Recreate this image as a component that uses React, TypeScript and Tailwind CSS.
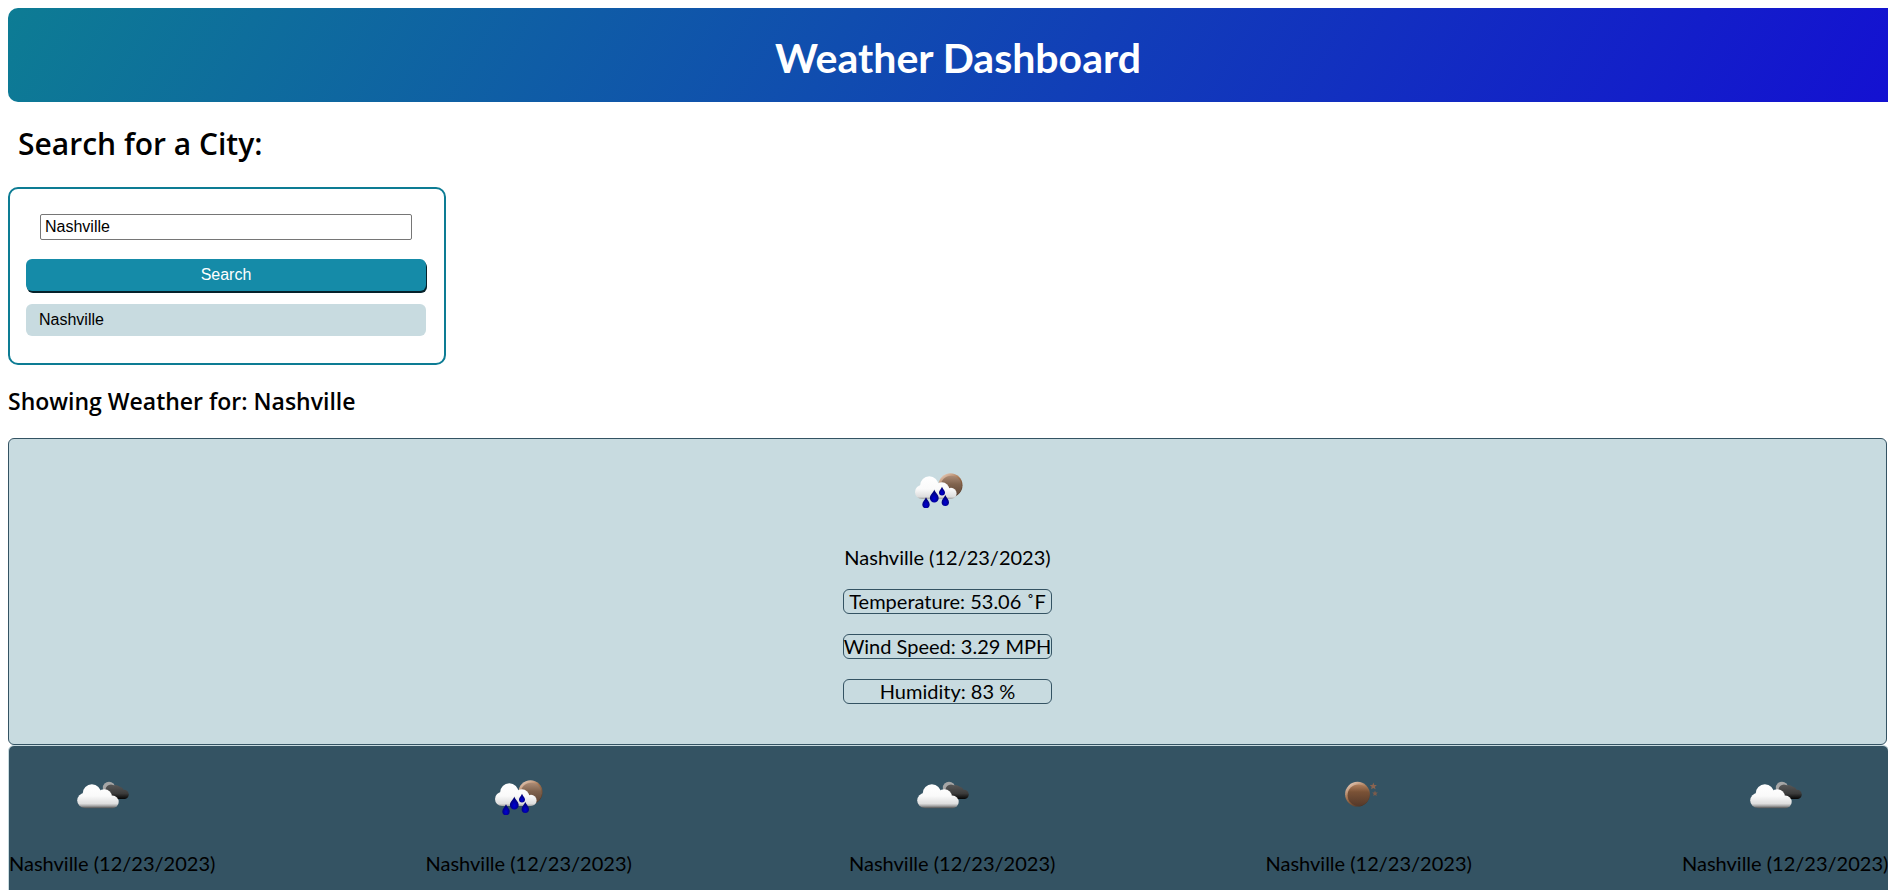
import { useState } from "react";

type IconKind = "clouds" | "rain" | "clear";

function WeatherIcon({ kind }: { kind: IconKind }) {
  return (
    <svg viewBox="0 0 100 100" className="block size-[100px]" role="img" aria-label={kind}>
      <defs>
        <linearGradient id="white-cloud" gradientUnits="userSpaceOnUse" x1="0" y1="38" x2="0" y2="62">
          <stop offset="0" stopColor="#ffffff" />
          <stop offset="0.5" stopColor="#fafafa" />
          <stop offset="0.82" stopColor="#dddddd" />
          <stop offset="0.92" stopColor="#a0a0a0" />
          <stop offset="1" stopColor="#555555" />
        </linearGradient>
        <linearGradient id="dark-cloud" gradientUnits="userSpaceOnUse" x1="0" y1="39" x2="0" y2="53">
          <stop offset="0" stopColor="#565656" />
          <stop offset="0.6" stopColor="#3c3c3c" />
          <stop offset="1" stopColor="#050505" />
        </linearGradient>
        <linearGradient id="moon" x1="0" y1="0" x2="0" y2="1">
          <stop offset="0" stopColor="#b07f5c" />
          <stop offset="0.35" stopColor="#7a5236" />
          <stop offset="1" stopColor="#55392a" />
        </linearGradient>
        <linearGradient id="rain-moon" x1="0" y1="0" x2="0" y2="1">
          <stop offset="0" stopColor="#ac8c76" />
          <stop offset="0.4" stopColor="#80634e" />
          <stop offset="1" stopColor="#5b4334" />
        </linearGradient>
        <linearGradient id="moon-rim" x1="0" y1="0" x2="0.6" y2="1">
          <stop offset="0" stopColor="#f6e0d2" />
          <stop offset="0.5" stopColor="#a77753" />
          <stop offset="1" stopColor="#50321f" />
        </linearGradient>
        <radialGradient id="drop" cx="0.5" cy="0.7" r="0.6">
          <stop offset="0" stopColor="#0000d8" />
          <stop offset="1" stopColor="#00006c" />
        </radialGradient>
      </defs>
      {kind === "clear" && (
        <g>
          <circle cx="47.5" cy="48.2" r="12.4" fill="url(#moon-rim)" />
          <circle cx="48.4" cy="49.2" r="10.8" fill="url(#moon)" />
          <path d="M63.3 36.500l1 2.400 2.600.2-2 1.700.7 2.500-2.300-1.400-2.200 1.400.6-2.500-2-1.700 2.700-.2z" fill="#8a6450" />
          <path d="M65 44.500l.8 2 2.100.1-1.600 1.400.5 2.100-1.800-1.200-1.800 1.200.5-2.100-1.600-1.400 2.100-.1z" fill="#7d5c4b" />
        </g>
      )}
      {kind === "clouds" && (
        <g>
          <circle cx="56" cy="42" r="6.2" fill="#a6a6a6" />
          <g fill="url(#dark-cloud)">
            <circle cx="58" cy="44" r="5.5" />
            <circle cx="62.5" cy="44.5" r="5.5" />
            <circle cx="66" cy="45.5" r="4.8" />
            <circle cx="71.2" cy="48.4" r="4.6" />
            <rect x="58" y="44" width="13.5" height="9" />
          </g>
          <g fill="url(#white-cloud)">
            <circle cx="31.8" cy="54.5" r="7.6" />
            <circle cx="38.9" cy="47.5" r="9.2" />
            <circle cx="51.3" cy="51" r="7.8" />
            <circle cx="59.4" cy="55.9" r="6.3" />
            <rect x="31.8" y="50" width="27.6" height="12.2" />
          </g>
        </g>
      )}
      {kind === "rain" && (
        <g>
          <circle cx="60.5" cy="46.3" r="12" fill="url(#moon-rim)" />
          <circle cx="61.2" cy="47.3" r="10.6" fill="url(#rain-moon)" />
          <g fill="url(#white-cloud)">
            <circle cx="32" cy="53" r="7" />
            <circle cx="39.3" cy="46.5" r="9.2" />
            <circle cx="51.8" cy="50.8" r="7.6" />
            <circle cx="61" cy="54.4" r="5.6" />
            <rect x="32" y="50" width="29" height="10" />
          </g>
          <path d="M44.300 50.500c1 3.200 4.400 5.200 4.400 8.600a4.400 4.400 0 0 1-8.800 0c0-3.400 3.400-5.400 4.400-8.600z" fill="url(#drop)" />
          <path d="M52 47.700c.7 2.200 3 3.600 3 5.800a3 3 0 0 1-6 0c0-2.200 2.300-3.600 3-5.800z" fill="url(#drop)" />
          <path d="M36 58.200c.9 2.600 3.700 4.300 3.700 7.200a3.700 3.700 0 0 1-7.400 0c0-2.900 2.800-4.600 3.700-7.200z" fill="url(#drop)" />
          <path d="M55.300 56c.9 2.600 3.700 4.300 3.700 7.200a3.700 3.700 0 0 1-7.400 0c0-2.900 2.800-4.600 3.700-7.200z" fill="url(#drop)" />
        </g>
      )}
    </svg>
  );
}

const forecast: { id: number; icon: IconKind }[] = [
  { id: 1, icon: "clouds" },
  { id: 2, icon: "rain" },
  { id: 3, icon: "clouds" },
  { id: 4, icon: "clear" },
  { id: 5, icon: "clouds" },
];

const readings = ["Temperature: 53.06 ˚F", "Wind Speed: 3.29 MPH", "Humidity: 83 %"];

export default function App() {
  const [city, setCity] = useState("Nashville");

  return (
    <div className="h-screen overflow-hidden bg-white pt-2 pl-2 font-['Trebuchet_MS',Lato,sans-serif] text-black">
      <header className="-mr-5 rounded-[10px] bg-linear-120/srgb from-[#0d7c94] to-[#1410d2] pt-[23px] pb-[17px]">
        <h1 className="text-center text-[41px] leading-[54px] font-bold text-white">Weather Dashboard</h1>
      </header>

      <main>
        <h2 className="mt-[23px] pl-[10px] font-['Trebuchet_MS','Open_Sans',sans-serif] text-[30px] leading-[38px] font-semibold">
          <label htmlFor="city">Search for a City:</label>
        </h2>
        <form
          className="mt-6 flex w-[438px] flex-col rounded-[10px] border-2 border-[#0d7c94] pt-[25px] pr-[18px] pb-[27px] pl-4 font-['Liberation_Sans',Arial,sans-serif] text-base"
          onSubmit={(e) => e.preventDefault()}
        >
          <input
            id="city"
            type="text"
            value={city}
            onChange={(e) => setCity(e.target.value)}
            className="mx-[14px] h-[26px] rounded-[2px] border border-[#767676] bg-white px-1 leading-5"
          />
          <button
            type="submit"
            className="mt-[19px] h-8 rounded-md bg-[#158ba8] text-white shadow-[1px_2px_0_#06222b]"
          >
            Search
          </button>
          <button type="button" className="mt-[13px] h-8 rounded-md bg-[#c8dbe0] px-[13px] text-left">
            Nashville
          </button>
        </form>

        <h3 className="mt-5 font-['Trebuchet_MS','Open_Sans',sans-serif] text-[23px] leading-8 font-semibold">
          Showing Weather for: Nashville
        </h3>

        <section className="mt-[21px] mr-px flex flex-col items-center rounded-md border border-[#345363] bg-[#c8dbe0] pb-10 text-[20px] leading-[23px]">
          <div className="flex w-max flex-col gap-5">
            <div className="-mb-[13px] ml-[47px]">
              <WeatherIcon kind="rain" />
            </div>
            <p className="text-center whitespace-nowrap">Nashville (12/23/2023)</p>
            {readings.map((r) => (
              <p key={r} className="rounded-md border border-[#345363] text-center whitespace-nowrap">
                {r}
              </p>
            ))}
          </div>
        </section>

        <section className="-mr-px grid grid-cols-[206px_213px_206px_206px_206px] justify-between rounded-md border border-[#c8dbe0] bg-[#345363] pb-10 text-[20px] leading-[23px]">
          {forecast.map((day) => (
            <article key={day.id} className="flex w-[206px] flex-col gap-1.5">
              <div className="ml-11">
                <WeatherIcon kind={day.icon} />
              </div>
              <p className="text-center whitespace-nowrap">Nashville (12/23/2023)</p>
            </article>
          ))}
        </section>
      </main>
    </div>
  );
}
